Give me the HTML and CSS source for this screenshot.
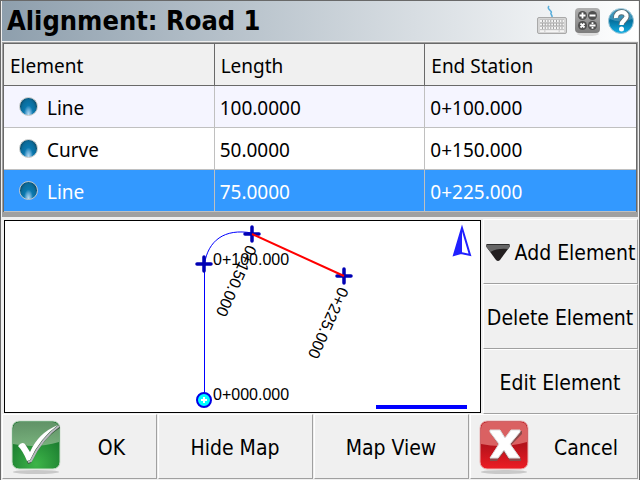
FILE: index.html
```html
<!DOCTYPE html>
<html lang="en">
<head>
    <meta charset="UTF-8">
    <meta name="viewport" content="width=device-width, initial-scale=1.0">
    <title>Alignment: Road 1</title>
    <link rel="stylesheet" href="styles.css">
</head>
<body>
    <div class="window">
        <header class="title-bar">
            <h1>Alignment: Road 1</h1>
            <div class="tools">
                <button class="tool" aria-label="Keyboard">
                    <svg width="32" height="32" viewBox="0 0 32 32">
                        <path d="M13 1 C10 4 17 6 15 8 C14 9 17 10 16 13" fill="none" stroke="#5aaedb" stroke-width="1.6"/>
                        <rect x="1.5" y="12.5" width="29" height="16" rx="1.5" fill="#d6d6d6" stroke="#a9a9a9"/>
                        <path d="M4 16h24M4 19.500h24M4 23h24" stroke="#8f8f8f" stroke-width="2.6"/>
                        <path d="M4 16h24M4 19.500h24M4 23h24" stroke="#f4f4f4" stroke-width="2" stroke-dasharray="2 .8"/>
                        <path d="M4 26.200h4M9.500 26.200h13M24 26.200h4" stroke="#f4f4f4" stroke-width="1.8"/>
                    </svg>
                </button>
                <button class="tool" aria-label="Calculator">
                    <svg width="28" height="32" viewBox="0 0 28 32">
                        <defs>
                            <linearGradient id="calcFill" x1="0" y1="0" x2="0" y2="1">
                                <stop offset="0" stop-color="#b0b0b0"/>
                                <stop offset="1" stop-color="#7d7d7d"/>
                            </linearGradient>
                        </defs>
                        <ellipse cx="14" cy="29" rx="11" ry="2" fill="#dcdcdc"/>
                        <rect x="1" y="3" width="25" height="25" rx="4" fill="url(#calcFill)"/>
                        <g fill="#505050">
                            <circle cx="8.500" cy="10.500" r="4.500"/>
                            <circle cx="18.500" cy="10.500" r="4.500"/>
                            <circle cx="8.500" cy="20.500" r="4.500"/>
                            <circle cx="18.500" cy="20.500" r="4.500"/>
                        </g>
                        <path d="M5.500 10.500h6M8.500 7.500v6M15.500 10.500h6M6.500 18.500l4 4M10.500 18.500l-4 4M15.500 20.500h6M18.500 17.300v1.700M18.500 22v1.700" stroke="#fff" stroke-width="1.8"/>
                    </svg>
                </button>
                <button class="tool" aria-label="Help">
                    <svg width="28" height="32" viewBox="0 0 28 32">
                        <defs>
                            <linearGradient id="helpFill" x1="0" y1="0" x2="0" y2="1">
                                <stop offset="0" stop-color="#1687b5"/>
                                <stop offset=".5" stop-color="#05719f"/>
                                <stop offset="1" stop-color="#12b0e6"/>
                            </linearGradient>
                        </defs>
                        <circle cx="13" cy="16" r="12.500" fill="url(#helpFill)" stroke="#9cc6d8"/>
                        <path d="M2 14a11 11 0 0 1 22 0q-11 5-22 0z" fill="#fff" opacity=".2"/>
                        <path d="M8 13C7.500 5.500 19 5.500 18.500 11.500C18 15.500 13.500 15.500 13.500 20" fill="none" stroke="#5c6d75" stroke-width="6"/>
                        <path d="M8 13C7.500 5.500 19 5.500 18.500 11.500C18 15.500 13.500 15.500 13.500 20" fill="none" stroke="#fff" stroke-width="4.200"/>
                        <circle cx="13.500" cy="24" r="2.500" fill="#fff"/>
                    </svg>
                </button>
            </div>
        </header>

        <div class="table-frame">
            <table class="elements">
                <thead>
                    <tr><th>Element</th><th>Length</th><th>End Station</th></tr>
                </thead>
                <tbody>
                    <tr><td><span class="ball"></span>Line</td><td>100.0000</td><td>0+100.000</td></tr>
                    <tr><td><span class="ball"></span>Curve</td><td>50.0000</td><td>0+150.000</td></tr>
                    <tr class="selected"><td><span class="ball"></span>Line</td><td>75.0000</td><td>0+225.000</td></tr>
                </tbody>
            </table>
        </div>

        <main class="work-area">
            <div class="map">
                <svg class="map-drawing" viewBox="0 0 475 191" preserveAspectRatio="xMinYMin meet">
                    <!-- alignment -->
                    <path d="M199.500 179V43" stroke="#00f" fill="none"/>
                    <path d="M199.500 43C203 20 219 7 247 12" stroke="#00f" fill="none"/>
                    <!-- station points -->
                    <path d="M192 43h14M199 36v14M240 13h14M247 6v14M332 55h14M339 48v14" stroke="#0000b4" stroke-width="3.500" stroke-linecap="round"/>
                    <path d="M247 13L339 55" stroke="#f00" stroke-width="2"/>
                    <circle cx="199" cy="179" r="7" fill="#0ff" stroke="#0000e6" stroke-width="2"/>
                    <path d="M196 179h6M199 176v6" stroke="#fff" stroke-width="2"/>
                    <!-- station labels -->
                    <g class="station">
                        <text x="208" y="179">0+000.000</text>
                        <text x="208" y="44">0+100.000</text>
                        <text transform="translate(242 23) rotate(114.500)">0+150.000</text>
                        <text transform="translate(334 65) rotate(114.500)">0+225.000</text>
                    </g>
                    <!-- north arrow and scale -->
                    <path d="M457 7L449 34L456 32L465 34Z" fill="#fff" stroke="#2020ff" stroke-width="2"/>
                    <path d="M457 7L449 34L457 32Z" fill="#2020ff"/>
                    <path d="M371 186h91" stroke="#00f" stroke-width="4"/>
                </svg>
            </div>
            <div class="side">
                <button class="btn btn-menu">
                    <svg width="26" height="20" viewBox="0 0 26 20">
                        <path d="M2 1h22q1.500 1 .5 3L15 17q-2 2-4 0L1.500 4Q.5 2 2 1z" fill="#231f20"/>
                        <path d="M2 1h22q1.500 1 .5 3L23 6Q12 5 5.500 9L1.500 4Q.5 2 2 1z" fill="#666"/>
                        <path d="M2 1.500h22" stroke="#2b2b2b"/>
                    </svg>
                    Add Element
                </button>
                <button class="btn">Delete Element</button>
                <button class="btn">Edit Element</button>
            </div>
        </main>

        <footer class="bottom-bar">
            <button class="btn btn-icon">
                <svg width="56" height="56" viewBox="0 0 56 56">
                    <defs>
                        <radialGradient id="okFill" cx=".5" cy=".9" r=".8">
                            <stop offset="0" stop-color="#3db549"/>
                            <stop offset="1" stop-color="#14702a"/>
                        </radialGradient>
                        <linearGradient id="okGloss" x1="0" y1="0" x2="0" y2="1">
                            <stop offset="0" stop-color="#6f9a72"/>
                            <stop offset="1" stop-color="#86b788"/>
                        </linearGradient>
                    </defs>
                    <ellipse cx="28" cy="52" rx="23" ry="2" fill="#c9c9c9"/>
                    <rect x="4" y="1" width="48" height="48" rx="7" fill="url(#okFill)" stroke="#cfe0cf"/>
                    <path d="M5 22V9q0-7 7-7h32q7 0 7 7v13q-23 7-46 2z" fill="url(#okGloss)" opacity=".85"/>
                    <path d="M12 26q3-4 6-1l4 7Q30 13 51 5L52 8Q34 19 23 43L20 44Q16 32 12 27z" fill="#3b5c40"/>
                    <path d="M10 26q4-5 7-2l5 8Q30 13 50 5Q32 18 22 40L19 41Q15 31 10 26z" fill="#fff"/>
                    <path d="M51 6Q34 18 23 41L20 42" fill="none" stroke="#b9b9c0" stroke-width="2"/>
                </svg>
                <span>OK</span>
            </button>
            <button class="btn">Hide Map</button>
            <button class="btn">Map View</button>
            <button class="btn btn-icon">
                <svg width="56" height="56" viewBox="0 0 56 56">
                    <defs>
                        <linearGradient id="noFill" x1="0" y1="0" x2="0" y2="1">
                            <stop offset="0" stop-color="#b5121b"/>
                            <stop offset=".5" stop-color="#b5121b"/>
                            <stop offset="1" stop-color="#ed1c24"/>
                        </linearGradient>
                    </defs>
                    <ellipse cx="28" cy="52" rx="23" ry="2" fill="#c9c9c9"/>
                    <rect x="4" y="1" width="48" height="48" rx="7" fill="url(#noFill)" stroke="#eab5b5"/>
                    <path d="M5 22V9q0-7 7-7h32q7 0 7 7v13q-23 7-46 2z" fill="#e0706e" opacity=".85"/>
                    <path d="M15 11h10l5 8 6-8h10v3L35 25l10 14v2H34l-6-9-7 9H14v-3l9-13-8-11z" fill="#8c4a4a"/>
                    <path d="M14 10h10l5 8 6-8h9v2L34 24l10 14H33l-5-8-6 8H14L23 24 14 12z" fill="#fff" stroke="#ddd"/>
                </svg>
                <span>Cancel</span>
            </button>
        </footer>
    </div>
</body>
</html>
```

FILE: styles.css
```css
* {
    box-sizing: border-box;
}
body {
    margin: 0;
    background-color: #f0f0f0;
    color: #000;
    font-family: "DejaVu Sans Condensed", "DejaVu Sans", sans-serif;
}
.window {
    display: flex;
    flex-direction: column;
    min-height: 100vh;
    padding: 0 1px 1px;
    border: 1px solid #696969;
}
.title-bar {
    display: flex;
    align-items: center;
    justify-content: space-between;
    height: 40px;
    padding: 0 2px 0 5px;
    background: linear-gradient(to right, #8e9fad, #fff);
}
.title-bar h1 {
    margin: 0;
    font-size: 27px;
    line-height: 32px;
}
.tools {
    display: flex;
    gap: 6px;
}
.tool {
    display: flex;
    padding: 0;
    border: none;
    background: none;
}

/* element list */
.table-frame {
    margin-top: 1px;
    border: 1px solid #a0a0a0;
    border-bottom: 5px solid #a0a0a0;
}
.elements {
    width: 100%;
    table-layout: fixed;
    border-collapse: separate;
    border-spacing: 0;
    border: 1px solid #696969;
    border-bottom: none;
    font-family: "Noto Sans", "Open Sans", sans-serif;
    font-size: 19px;
    line-height: 24px;
}
.elements th,
.elements td {
    height: 42px;
    padding: 2px 5px 0;
    text-align: left;
    font-weight: normal;
    border-right: 1px solid #c0c0c0;
    border-bottom: 1px solid #c0c0c0;
}
.elements th {
    padding-left: 6px;
    background-color: #f0f0f0;
    border-color: #696969;
}
.elements th:last-child,
.elements td:last-child {
    border-right: none;
}
.elements tbody tr {
    background-color: #fff;
}
.elements tbody tr:first-child {
    background-color: #f5f5ff;
}
.elements tbody tr.selected {
    background-color: #3399ff;
    color: #fff;
}
.ball {
    display: inline-block;
    width: 19px;
    height: 19px;
    margin: 0 9px 0 10px;
    vertical-align: -1px;
    border: 1px solid #c4c8c8;
    border-radius: 50%;
    background: radial-gradient(ellipse at 50% 95%, #b8dcf4 0, #5aa5d2 22%, #0a78ae 38%, #0a6c9c 62%, #0e3f54 88%);
}

/* map and side buttons */
.work-area {
    display: flex;
    flex: 1;
    gap: 2px;
    padding-top: 2px;
}
.map {
    flex: 1;
    margin: 1px 0 1px 2px;
    border: 1px solid #000;
    background-color: #fff;
}
.map-drawing {
    display: block;
    width: 100%;
}
.station {
    font-family: "Liberation Sans", Arial, sans-serif;
    font-size: 16px;
}
.side {
    display: flex;
    flex-direction: column;
    width: 155px;
}
.btn {
    display: flex;
    flex: 1;
    align-items: center;
    justify-content: center;
    padding: 2px 1px 0 0;
    border: 1px solid;
    border-color: #fff #a0a0a0 #a0a0a0 #fff;
    background-color: #f0f0f0;
    color: #000;
    font-family: inherit;
    font-size: 21px;
    line-height: 26px;
    white-space: nowrap;
}
.btn-menu {
    gap: 4px;
}
.bottom-bar {
    display: grid;
    grid-template-columns: 155px 155px 155px 1fr;
    gap: 1px;
    height: 65px;
}
.btn-icon {
    gap: 4px;
    padding-left: 5px;
}
.btn-icon span {
    flex: 1;
}
```
